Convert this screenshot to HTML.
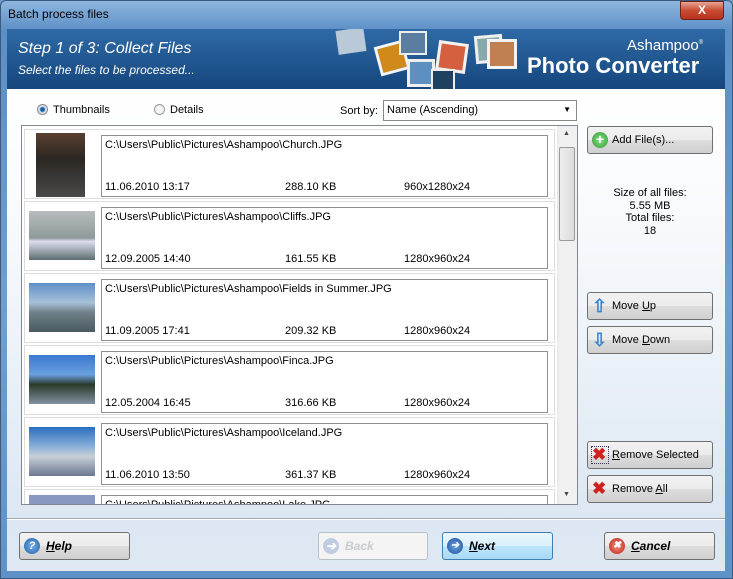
<!DOCTYPE html>
<html><head><style>
*{box-sizing:border-box;margin:0;padding:0}
body{width:733px;height:579px;overflow:hidden;font-family:"Liberation Sans",sans-serif;font-size:11px;color:#000;background:#6d9bc9;position:relative}
.abs{position:absolute}
.frame{left:0;top:0;width:733px;height:579px;background:linear-gradient(180deg,#8fb6de 0,#5b8fc6 30px,#6d9fd0 300px,#5f92c7 579px);border:1px solid #3a5a80;border-radius:6px 6px 0 0}
.title{left:8px;top:7px;font-size:12px;color:#000}
.close{left:680px;top:1px;width:44px;height:19px;background:linear-gradient(#e8a393,#c94c35 50%,#b8321c);border:1px solid #6b2418;border-radius:0 0 4px 4px;color:#fff;font-weight:bold;text-align:center;font-size:12px;line-height:17px}
.banner{left:7px;top:29px;width:718px;height:60px;background:linear-gradient(180deg,#2f6aa6,#15467d);overflow:hidden}
.content{left:7px;top:89px;width:718px;height:482px;background:linear-gradient(180deg,#fff 0,#f6f9fc 150px,#dce7f3 430px,#dfe8f3 482px)}
.list{left:21px;top:125px;width:557px;height:380px;border:1px solid #828790;background:#fff;overflow:hidden}
.item{position:absolute;left:2px;width:531px;height:70px;border:1px solid #dcdcdc;background:#fff}
.box{position:absolute;left:76px;top:5px;width:447px;height:62px;border:1px solid #8e8f8f}
.box span{position:absolute;font-size:11px;white-space:nowrap}
.btn{position:absolute;border:1px solid #707070;border-radius:3px;background:linear-gradient(180deg,#f2f2f2 0,#ebebeb 50%,#dddddd 51%,#cfcfcf 100%);font-size:11px;line-height:26px;padding-left:24px}
.bb{font-weight:bold;font-style:italic;font-size:12px;line-height:26px;padding-left:26px}
.ic{position:absolute;left:4px;top:5px;width:16px;height:16px;border-radius:50%}
</style></head><body>
<div class="abs frame"></div>
<div class="abs title">Batch process files</div>
<div class="abs close">X</div>
<div class="abs banner">
 <div class="abs" style="left:11px;top:11px;color:#fff;font-style:italic;font-size:16px">Step 1 of 3: Collect Files</div>
 <div class="abs" style="left:11px;top:34px;color:#fff;font-style:italic;font-size:12px">Select the files to be processed...</div>
 <div class="abs" style="left:330px;top:0;width:28px;height:24px;background:#b9c9d8;transform:rotate(-8deg)"></div>
 <div class="abs" style="left:370px;top:14px;width:30px;height:30px;background:#e8e8e8;border:3px solid #f4f4f4;transform:rotate(-15deg)"><div style="width:100%;height:100%;background:#d18a1a"></div></div>
 <div class="abs" style="left:392px;top:2px;width:28px;height:24px;background:#5b7ea0;border:2px solid #eee"></div>
 <div class="abs" style="left:400px;top:30px;width:28px;height:28px;background:#5d8fc0;border:3px solid #eee"></div>
 <div class="abs" style="left:430px;top:13px;width:30px;height:30px;background:#d46040;border:3px solid #f2f2f2;transform:rotate(8deg)"></div>
 <div class="abs" style="left:424px;top:40px;width:24px;height:24px;background:#1f4060;border:2px solid #eee"></div>
 <div class="abs" style="left:468px;top:6px;width:28px;height:28px;background:#8aa;border:3px solid #eee;transform:rotate(-5deg)"></div>
 <div class="abs" style="left:480px;top:10px;width:30px;height:30px;background:#c08050;border:3px solid #f2f2f2"></div>
 <div class="abs" style="left:620px;top:8px;color:#fff;font-size:15px">Ashampoo<sup style="font-size:6px">®</sup></div>
 <div class="abs" style="left:520px;top:24px;color:#fff;font-size:22px;font-weight:bold">Photo Converter</div>
</div>
<div class="abs content"></div>
<div class="abs" style="left:37px;top:104px;width:11px;height:11px;border-radius:50%;border:1px solid #888;background:radial-gradient(#1e5fa8 30%,#b9d0ea 45%,#eee 70%)"></div>
<div class="abs" style="left:53px;top:104px">Thumbnails</div>
<div class="abs" style="left:154px;top:104px;width:11px;height:11px;border-radius:50%;border:1px solid #999;background:#f4f4f4"></div>
<div class="abs" style="left:170px;top:104px">Details</div>
<div class="abs" style="left:340px;top:105px">Sort by:</div>
<div class="abs" style="left:383px;top:100px;width:194px;height:21px;border:1px solid #888;background:#fff;padding:3px 0 0 3px">Name (Ascending)<span style="position:absolute;right:5px;top:4px;font-size:8px">▼</span></div>
<div class="abs list">
 <div class="item" style="top:3px"><div class="abs" style="left:11px;top:3px;width:49px;height:64px;background:linear-gradient(#5a4030,#2a2622 40%,#4a4a4a)"></div><div class="box"><span style="left:3px;top:3px">C:\Users\Public\Pictures\Ashampoo\Church.JPG</span><span style="left:3px;top:45px">11.06.2010 13:17</span><span style="left:183px;top:45px">288.10 KB</span><span style="left:302px;top:45px">960x1280x24</span></div></div>
 <div class="item" style="top:75px"><div class="abs" style="left:4px;top:9px;width:66px;height:49px;background:linear-gradient(#b8bcbc,#8e9a9a 55%,#dde 62%,#5c6e70)"></div><div class="box"><span style="left:3px;top:3px">C:\Users\Public\Pictures\Ashampoo\Cliffs.JPG</span><span style="left:3px;top:45px">12.09.2005 14:40</span><span style="left:183px;top:45px">161.55 KB</span><span style="left:302px;top:45px">1280x960x24</span></div></div>
 <div class="item" style="top:147px"><div class="abs" style="left:4px;top:9px;width:66px;height:49px;background:linear-gradient(#5f8fc8,#a7c0d8 40%,#70808a 60%,#4a5a60)"></div><div class="box"><span style="left:3px;top:3px">C:\Users\Public\Pictures\Ashampoo\Fields in Summer.JPG</span><span style="left:3px;top:45px">11.09.2005 17:41</span><span style="left:183px;top:45px">209.32 KB</span><span style="left:302px;top:45px">1280x960x24</span></div></div>
 <div class="item" style="top:219px"><div class="abs" style="left:4px;top:9px;width:66px;height:49px;background:linear-gradient(#3a78d0,#6aa0e0 40%,#2a3a2a 60%,#8090a0)"></div><div class="box"><span style="left:3px;top:3px">C:\Users\Public\Pictures\Ashampoo\Finca.JPG</span><span style="left:3px;top:45px">12.05.2004 16:45</span><span style="left:183px;top:45px">316.66 KB</span><span style="left:302px;top:45px">1280x960x24</span></div></div>
 <div class="item" style="top:291px"><div class="abs" style="left:4px;top:9px;width:66px;height:49px;background:linear-gradient(#2a6ec0,#8ab0d8 40%,#c8d0d8 60%,#6a7890)"></div><div class="box"><span style="left:3px;top:3px">C:\Users\Public\Pictures\Ashampoo\Iceland.JPG</span><span style="left:3px;top:45px">11.06.2010 13:50</span><span style="left:183px;top:45px">361.37 KB</span><span style="left:302px;top:45px">1280x960x24</span></div></div>
 <div class="item" style="top:363px"><div class="abs" style="left:4px;top:5px;width:66px;height:49px;background:#8898c0"></div><div class="box"><span style="left:3px;top:3px">C:\Users\Public\Pictures\Ashampoo\Lake.JPG</span></div></div>
 <div class="abs" style="left:535px;top:0;width:20px;height:378px;background:#f0f0f0;border-left:1px solid #e6e6e6"></div>
 <div class="abs" style="left:541px;top:4px;font-size:7px;color:#444">▲</div>
 <div class="abs" style="left:541px;top:365px;font-size:7px;color:#444">▼</div>
 <div class="abs" style="left:537px;top:21px;width:16px;height:94px;border:1px solid #9a9a9a;border-radius:2px;background:linear-gradient(90deg,#eee,#dcdcdc)"></div>
</div>
<div class="btn" style="left:587px;top:126px;width:126px;height:28px"><div class="ic" style="background:radial-gradient(#8fe08f,#2a9a2a);color:#fff;font-weight:bold;font-size:14px;line-height:15px;text-align:center">+</div>Add File(s)...</div>
<div class="abs" style="left:587px;top:187px;width:126px;text-align:center;line-height:12.5px">Size of all files:<br>5.55 MB<br>Total files:<br>18</div>
<div class="btn" style="left:587px;top:292px;width:126px;height:28px"><div class="ic" style="border-radius:0;color:#3a86d0;font-size:18px;line-height:16px;font-weight:bold">⇧</div>Move <u>U</u>p</div>
<div class="btn" style="left:587px;top:326px;width:126px;height:28px"><div class="ic" style="border-radius:0;color:#3a86d0;font-size:18px;line-height:16px;font-weight:bold">⇩</div>Move <u>D</u>own</div>
<div class="btn" style="left:587px;top:441px;width:126px;height:28px"><div class="ic" style="border-radius:0;color:#d02020;font-size:17px;line-height:16px;font-weight:bold;outline:1px dotted #336">✖</div><u>R</u>emove Selected</div>
<div class="btn" style="left:587px;top:475px;width:126px;height:28px"><div class="ic" style="border-radius:0;color:#d02020;font-size:17px;line-height:16px;font-weight:bold">✖</div>Remove <u>A</u>ll</div>
<div class="abs" style="left:7px;top:518px;width:718px;height:1px;background:#a0a8b0"></div>
<div class="abs" style="left:7px;top:519px;width:718px;height:1px;background:#fff"></div>
<div class="btn bb" style="left:19px;top:532px;width:111px;height:28px"><div class="ic" style="background:radial-gradient(#7ab0e8,#1e5fa8);color:#fff;font-size:11px;line-height:16px;text-align:center">?</div><u>H</u>elp</div>
<div class="btn bb" style="left:318px;top:532px;width:110px;height:28px;border-color:#b8c0c8;background:#f4f4f4;color:#c8ccd0"><div class="ic" style="background:#c0cce0;color:#fff;line-height:16px;text-align:center">➔</div>Back</div>
<div class="btn bb" style="left:442px;top:532px;width:111px;height:28px;border-color:#3c7fb1;background:linear-gradient(180deg,#eaf6fd,#d9f0fc 50%,#bee6fd 51%,#a7d9f5)"><div class="ic" style="background:radial-gradient(#6aa0e0,#1e4f98);color:#fff;line-height:16px;text-align:center;font-size:10px">➔</div><u>N</u>ext</div>
<div class="btn bb" style="left:604px;top:532px;width:111px;height:28px"><div class="ic" style="background:radial-gradient(#f09080,#c02010);color:#fff;line-height:16px;text-align:center;font-size:10px">✖</div><u>C</u>ancel</div>
</body></html>
